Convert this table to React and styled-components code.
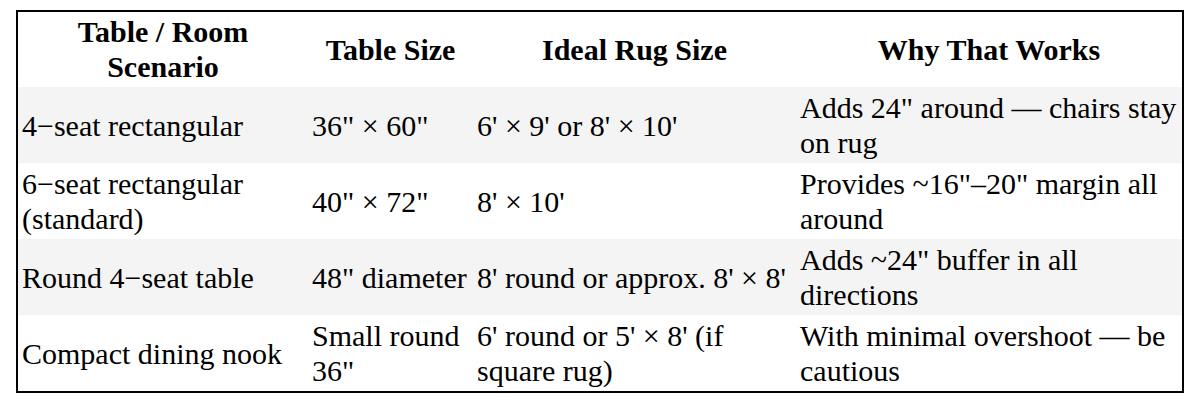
import React from "react";
import styled, { createGlobalStyle } from "styled-components";

const Global = createGlobalStyle`
  html, body { margin: 0; padding: 0; background: #fff; }
  body { font-family: "Liberation Serif", "Times New Roman", serif; color: #000; }
`;

const Page = styled.div`
  padding: 10px 10px 0 16px;
`;

const Table = styled.table`
  width: 1168px;
  table-layout: fixed;
  border-collapse: separate;
  border-spacing: 0;
  border: 2px solid #000;
  font-family: "Liberation Serif", "Times New Roman", serif;
  font-size: 30px;
  line-height: 35px;
  color: #000;
`;

const Row = styled.tr`
  background: ${(p) => (p.$shaded ? "#f4f4f4" : "#ffffff")};
`;

const Head = styled.th`
  font-weight: 700;
  text-align: center;
  vertical-align: middle;
  padding: 2px 4px 3px;
`;

const Cell = styled.td`
  text-align: left;
  vertical-align: middle;
  padding: 3px 4px;
`;

const cols = [290, 165, 323, 386];
const headers = ["Table / Room Scenario", "Table Size", "Ideal Rug Size", "Why That Works"];
const rows = [
  ["4\u2212seat rectangular", "36\" × 60\"", "6' × 9' or 8' × 10'", "Adds 24\" around — chairs stay on rug"],
  ["6\u2212seat rectangular (standard)", "40\" × 72\"", "8' × 10'", "Provides ~16\"–20\" margin all around"],
  ["Round 4\u2212seat table", "48\" diameter", "8' round or approx. 8' × 8'", "Adds ~24\" buffer in all directions"],
  ["Compact dining nook", "Small round 36\"", "6' round or 5' × 8' (if square rug)", "With minimal overshoot — be cautious"],
];

export default function App() {
  return (
    <>
      <Global />
      <Page>
        <Table>
          <colgroup>
            {cols.map((w, i) => (
              <col key={i} style={{ width: w }} />
            ))}
          </colgroup>
          <thead>
            <Row>
              {headers.map((h) => (
                <Head key={h}>{h}</Head>
              ))}
            </Row>
          </thead>
          <tbody>
            {rows.map((r, i) => (
              <Row key={i} $shaded={i % 2 === 0}>
                {r.map((c, j) => (
                  <Cell key={j}>{c}</Cell>
                ))}
              </Row>
            ))}
          </tbody>
        </Table>
      </Page>
    </>
  );
}
